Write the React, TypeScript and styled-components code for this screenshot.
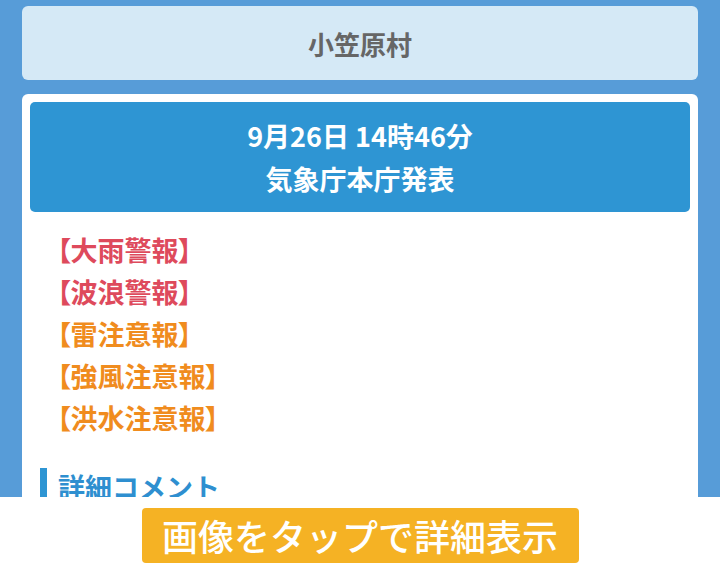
import styled, { createGlobalStyle } from "styled-components";

const GlobalStyle = createGlobalStyle`
  html, body {
    margin: 0;
    padding: 0;
    background: #579cd8;
    font-family: "Noto Sans CJK JP", "Noto Sans", sans-serif;
  }
`;

const warnings = [
  { text: "【大雨警報】", level: "warning" },
  { text: "【波浪警報】", level: "warning" },
  { text: "【雷注意報】", level: "advisory" },
  { text: "【強風注意報】", level: "advisory" },
  { text: "【洪水注意報】", level: "advisory" },
];

const Page = styled.div`
  display: flex;
  flex-direction: column;
  gap: 14px;
  padding: 6px 22px 0;
  height: 565px;
  box-sizing: border-box;
  overflow: hidden;
`;

const AreaCard = styled.div`
  height: 74px;
  background: #d5e9f6;
  border-radius: 6px;
  display: flex;
  align-items: center;
  justify-content: center;
  color: #666;
  font-size: 26px;
  font-weight: 700;
`;

const InfoCard = styled.div`
  background: #fff;
  border-radius: 6px 6px 0 0;
  padding: 8px 8px 0;
  flex: 1;
`;

const IssueBox = styled.div`
  height: 110px;
  background: #2e95d3;
  border-radius: 5px;
  display: flex;
  flex-direction: column;
  align-items: center;
  justify-content: center;
  gap: 3px;
  color: #fff;
  font-size: 27px;
  font-weight: 700;
  line-height: 40px;
  font-feature-settings: "palt";
`;

const WarningList = styled.ul`
  list-style: none;
  margin: 0;
  padding: 17px 0 0 27px;
`;

const WarningItem = styled.li<{ $level: string }>`
  font-size: 27px;
  font-weight: 700;
  line-height: 42px;
  font-feature-settings: "palt";
  color: ${({ $level }) => ($level === "warning" ? "#de4a5c" : "#f08c1e")};
`;

const SectionTitle = styled.h2`
  margin: 29px 0 0 10px;
  padding-left: 11px;
  border-left: 7px solid #2e95d3;
  color: #2e8fd0;
  font-size: 27px;
  font-weight: 700;
  line-height: 38px;
`;

const TapBar = styled.div`
  position: fixed;
  left: 0;
  right: 0;
  bottom: 0;
  height: 68px;
  background: #fff;
  display: flex;
  justify-content: center;
  padding-top: 11px;
  box-sizing: border-box;
`;

const TapButton = styled.button`
  width: 437px;
  height: 55px;
  background: #f5b224;
  border: none;
  border-radius: 4px;
  color: #fff;
  font-family: "Noto Sans CJK JP", sans-serif;
  font-size: 36px;
  font-weight: 500;
  line-height: 55px;
  padding: 0;
`;

export default function App() {
  return (
    <>
      <GlobalStyle />
      <Page>
        <AreaCard>小笠原村</AreaCard>
        <InfoCard>
          <IssueBox>
            <div>9月26日 14時46分</div>
            <div>気象庁本庁発表</div>
          </IssueBox>
          <WarningList>
            {warnings.map((w) => (
              <WarningItem key={w.text} $level={w.level}>
                {w.text}
              </WarningItem>
            ))}
          </WarningList>
          <SectionTitle>詳細コメント</SectionTitle>
        </InfoCard>
      </Page>
      <TapBar>
        <TapButton>画像をタップで詳細表示</TapButton>
      </TapBar>
    </>
  );
}
